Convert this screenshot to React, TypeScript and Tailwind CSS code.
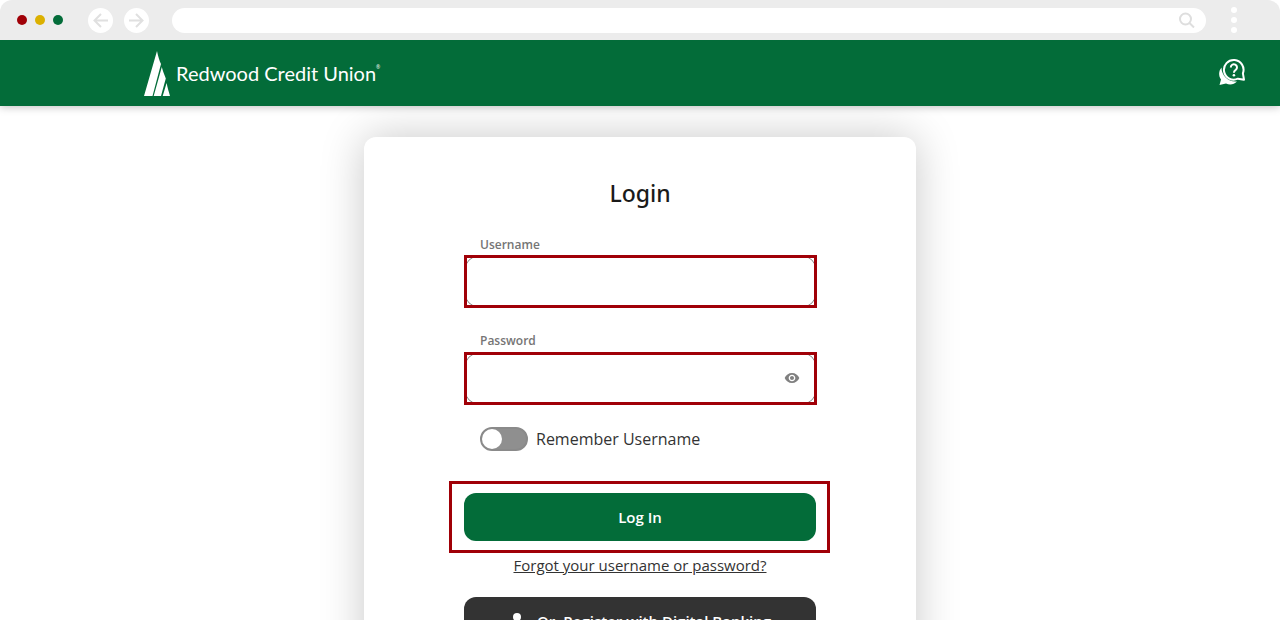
import { useState } from "react";

const BrowserBar = () => (
    <div className="relative z-10 flex h-10 items-center rounded-t-xl bg-[#ececec] pl-4">
        <div className="flex w-[72px] items-center gap-2 pl-px">
            <span className="h-[10px] w-[10px] rounded-full bg-[#a00007]" />
            <span className="h-[10px] w-[10px] rounded-full bg-[#dbb000]" />
            <span className="h-[10px] w-[10px] rounded-full bg-[#036c39]" />
        </div>
        <div className="flex gap-[11px]">
            <button type="button" aria-label="Back" className="flex h-[25px] w-[25px] items-center justify-center rounded-full bg-white">
                <svg width="15" height="15" viewBox="0 0 15 15" fill="none" stroke="#e0e0e0" strokeWidth="2">
                    <path d="M15 7.5H1.5M8 1L1.5 7.5L8 14" />
                </svg>
            </button>
            <button type="button" aria-label="Forward" className="flex h-[25px] w-[25px] items-center justify-center rounded-full bg-white">
                <svg width="15" height="15" viewBox="0 0 15 15" fill="none" stroke="#e0e0e0" strokeWidth="2">
                    <path d="M0 7.5H13.5M7 1L13.5 7.5L7 14" />
                </svg>
            </button>
        </div>
        <div className="ml-[23px] flex h-[25px] flex-1 items-center rounded-full bg-white pr-[11px]">
            <input type="text" aria-label="Address" className="min-w-0 flex-1 bg-transparent pl-4 text-sm outline-none" />
            <svg width="16" height="16" viewBox="0 0 16 16" fill="none" stroke="#dedede" strokeWidth="2">
                <circle cx="6.5" cy="7" r="5.5" />
                <path d="M10.5 11L15 15.5" />
            </svg>
        </div>
        <div className="mr-[43px] ml-[25px] flex flex-col gap-1">
            <span className="h-[6px] w-[6px] rounded-full bg-white" />
            <span className="h-[6px] w-[6px] rounded-full bg-white" />
            <span className="h-[6px] w-[6px] rounded-full bg-white" />
        </div>
    </div>
);

const Header = () => (
    <header className="relative flex h-[66px] items-center justify-between bg-[#036c39] pr-[34px] pl-36 shadow-[0_1px_8px_rgba(0,0,0,0.25)]">
        <a href="#" className="flex items-center gap-[6px] text-white">
            <svg width="26" height="46" viewBox="0 0 26 46" fill="currentColor">
                <path d="M13 1C14 6 15.500 11 17 14L8.500 46H0Z" />
                <path d="M17.800 17C18.800 21 20.500 25 21.800 28.500L17 46H9.700Z" />
                <path d="M22.600 33C23.500 38 25 42 26 46H18.700Z" />
            </svg>
            <span className="flex">
                <span className="font-['Lato',sans-serif] text-[20px] leading-6">Redwood Credit Union</span>
                <span className="text-[5px] leading-3">®</span>
            </span>
        </a>
        <button type="button" aria-label="Help" className="text-white">
            <svg width="28" height="28" viewBox="0 0 28 28" fill="none">
                <path d="M3.500 8.500C0.500 12 0.500 17 3 20.500L1.500 26L8 24.500C12 26.500 16 25.500 19 22.500C11 23.500 3.500 17 3.500 8.500Z" fill="currentColor" />
                <path d="M24.900 14.300A9.800 9.800 0 1 0 19.900 19.700L26 20.700Z" stroke="currentColor" strokeWidth="2" strokeLinejoin="round" />
                <path d="M12.800 8.500a3.100 3.100 0 1 1 4.900 2.400c-1.200.8-1.800 1.300-1.800 2.900" stroke="currentColor" strokeWidth="2" />
                <circle cx="15.900" cy="16.200" r="1.300" fill="currentColor" />
            </svg>
        </button>
    </header>
);

const EyeIcon = () => (
    <svg width="16" height="16" viewBox="0 0 24 24" fill="#808080">
        <path d="M12 4.500C7 4.500 2.730 7.610 1 12c1.730 4.390 6 7.500 11 7.500s9.270-3.110 11-7.500c-1.730-4.390-6-7.500-11-7.500zM12 17c-2.760 0-5-2.240-5-5s2.240-5 5-5 5 2.240 5 5-2.240 5-5 5zm0-8c-1.660 0-3 1.340-3 3s1.340 3 3 3 3-1.340 3-3-1.340-3-3-3z" />
    </svg>
);

export default function App() {
    const [username, setUsername] = useState("");
    const [password, setPassword] = useState("");
    const [showPassword, setShowPassword] = useState(false);
    const [remember, setRemember] = useState(false);

    return (
        <div className="h-screen overflow-hidden bg-white font-['Open_Sans',sans-serif]">
            <BrowserBar />
            <Header />
            <main className="px-4 pt-[31px]">
                <form
                    className="mx-auto w-full max-w-[552px] rounded-xl bg-white px-[100px] pt-10 pb-10 shadow-[0_0_44px_rgba(0,0,0,0.22)]"
                    onSubmit={(e) => e.preventDefault()}
                >
                    <h1 className="text-center font-['Noto_Sans',sans-serif] text-[23px] leading-8 font-medium text-[#1a1a1a]">Login</h1>

                    {/* Credentials */}
                    <label htmlFor="username" className="mt-7 ml-4 block text-xs leading-4 font-semibold text-[#757575]">
                        Username
                    </label>
                    <div className="mt-[2px] -mr-px flex outline-3 -outline-offset-3 outline-[#a00007]">
                        <input
                            id="username"
                            type="text"
                            value={username}
                            onChange={(e) => setUsername(e.target.value)}
                            className="h-[53px] w-full rounded-2xl border border-[#858585] px-4"
                        />
                    </div>
                    <label htmlFor="password" className="mt-[25px] ml-4 block text-xs leading-4 font-semibold text-[#757575]">
                        Password
                    </label>
                    <div className="mt-[3px] -mr-px flex outline-3 -outline-offset-3 outline-[#a00007]">
                        <div className="flex h-[53px] w-full items-center rounded-2xl border border-[#858585] pr-4 pb-[2px]">
                            <input
                                id="password"
                                type={showPassword ? "text" : "password"}
                                value={password}
                                onChange={(e) => setPassword(e.target.value)}
                                className="min-w-0 flex-1 px-4 outline-none"
                            />
                            <button type="button" aria-label="Show password" onClick={() => setShowPassword(!showPassword)}>
                                <EyeIcon />
                            </button>
                        </div>
                    </div>

                    {/* Remember toggle */}
                    <label className="mt-[22px] ml-4 flex items-center gap-2 leading-6 text-[#333333]">
                        <input
                            type="checkbox"
                            role="switch"
                            checked={remember}
                            onChange={(e) => setRemember(e.target.checked)}
                            className="h-6 w-12 appearance-none rounded-full border-2 border-[#8a8a8a] bg-[#8f8f8f] before:block before:h-5 before:w-5 before:rounded-full before:bg-white checked:bg-[#036c39] checked:before:ml-6"
                        />
                        Remember Username
                    </label>

                    <div className="mt-[30px] -mr-[14px] -ml-[15px] border-3 border-[#a00007] py-[9px] pr-[11px] pl-3">
                        <button type="submit" className="h-12 w-full rounded-xl bg-[#036c39] text-[15px] font-semibold text-white">
                            Log In
                        </button>
                    </div>
                    <div className="mt-[2px] text-center text-[15px] leading-5">
                        <a href="#" className="text-[#333333] underline">
                            Forgot your username or password?
                        </a>
                    </div>
                    <button
                        type="button"
                        className="mt-[22px] flex h-12 w-full items-center justify-center gap-3 rounded-xl bg-[#333333] text-[15px] font-semibold text-white"
                    >
                        <svg width="16" height="16" viewBox="0 0 16 16" fill="currentColor">
                            <circle cx="8" cy="4" r="4" />
                            <path d="M0 16c0-4 3-6 8-6s8 2 8 6z" />
                        </svg>
                        Or, Register with Digital Banking
                    </button>
                </form>
            </main>
        </div>
    );
}
